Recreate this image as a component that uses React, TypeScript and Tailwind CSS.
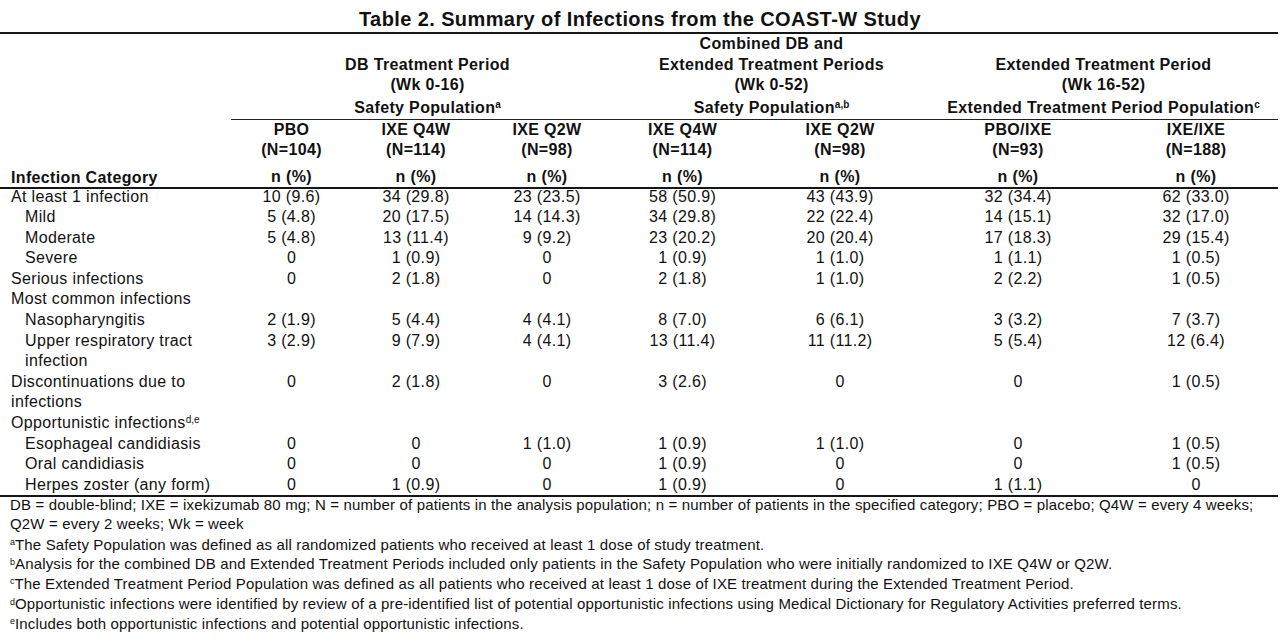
import React from "react";

type Row = { label: React.ReactNode; indent?: boolean; vals?: string[] };

const rows: Row[] = [
  { label: "At least 1 infection", vals: ["10 (9.6)", "34 (29.8)", "23 (23.5)", "58 (50.9)", "43 (43.9)", "32 (34.4)", "62 (33.0)"] },
  { label: "Mild", indent: true, vals: ["5 (4.8)", "20 (17.5)", "14 (14.3)", "34 (29.8)", "22 (22.4)", "14 (15.1)", "32 (17.0)"] },
  { label: "Moderate", indent: true, vals: ["5 (4.8)", "13 (11.4)", "9 (9.2)", "23 (20.2)", "20 (20.4)", "17 (18.3)", "29 (15.4)"] },
  { label: "Severe", indent: true, vals: ["0", "1 (0.9)", "0", "1 (0.9)", "1 (1.0)", "1 (1.1)", "1 (0.5)"] },
  { label: "Serious infections", vals: ["0", "2 (1.8)", "0", "2 (1.8)", "1 (1.0)", "2 (2.2)", "1 (0.5)"] },
  { label: "Most common infections" },
  { label: "Nasopharyngitis", indent: true, vals: ["2 (1.9)", "5 (4.4)", "4 (4.1)", "8 (7.0)", "6 (6.1)", "3 (3.2)", "7 (3.7)"] },
  {
    label: (
      <>
        Upper respiratory tract
        <br />
        infection
      </>
    ),
    indent: true,
    vals: ["3 (2.9)", "9 (7.9)", "4 (4.1)", "13 (11.4)", "11 (11.2)", "5 (5.4)", "12 (6.4)"],
  },
  {
    label: (
      <>
        Discontinuations due to
        <br />
        infections
      </>
    ),
    vals: ["0", "2 (1.8)", "0", "3 (2.6)", "0", "0", "1 (0.5)"],
  },
  {
    label: (
      <>
        Opportunistic infections<sup className="text-[10px] tracking-normal">d,e</sup>
      </>
    ),
  },
  { label: "Esophageal candidiasis", indent: true, vals: ["0", "0", "1 (1.0)", "1 (0.9)", "1 (1.0)", "0", "1 (0.5)"] },
  { label: "Oral candidiasis", indent: true, vals: ["0", "0", "0", "1 (0.9)", "0", "0", "1 (0.5)"] },
  { label: "Herpes zoster (any form)", indent: true, vals: ["0", "1 (0.9)", "0", "1 (0.9)", "0", "1 (1.1)", "0"] },
];

const colPad = ["", "", "", "pr-[10px]", "pr-[10px]", "", "pl-[7px]"];

const cols = [
  ["PBO", "(N=104)"],
  ["IXE Q4W", "(N=114)"],
  ["IXE Q2W", "(N=98)"],
  ["IXE Q4W", "(N=114)"],
  ["IXE Q2W", "(N=98)"],
  ["PBO/IXE", "(N=93)"],
  ["IXE/IXE", "(N=188)"],
];

function Sup({ children }: { children: React.ReactNode }) {
  return <sup className="text-[10px] font-bold tracking-normal">{children}</sup>;
}

function FSup({ children }: { children: React.ReactNode }) {
  return <sup className="text-[9px] tracking-normal">{children}</sup>;
}

export default function App() {
  return (
    <div className="w-[1280px] h-[641px] bg-white text-[#111] font-['Liberation_Sans',Arial,sans-serif] tracking-[0.35px] overflow-hidden">
      <div className="h-[32px] pt-[7px] text-center text-[20px] leading-[24px] font-bold tracking-[0.4px]">
        Table 2. Summary of Infections from the COAST-W Study
      </div>
      <div className="w-[1278px] border-t-2 border-[#161616]">
        <table className="w-[1278px] table-fixed border-collapse text-[16px] leading-[20.6px]">
          <colgroup>
            <col className="w-[231px]" />
            <col className="w-[121px]" />
            <col className="w-[128px]" />
            <col className="w-[134px]" />
            <col className="w-[147px]" />
            <col className="w-[168px]" />
            <col className="w-[178px]" />
            <col className="w-[171px]" />
          </colgroup>
          <thead className="font-bold">
            <tr>
              <th rowSpan={2} className="align-bottom text-left pl-[11px] p-0 font-bold border-b-2 border-[#161616]">
                <div className="h-[20px] leading-[20px] -mb-[1px]">Infection Category</div>
              </th>
              <th colSpan={3} className="align-bottom p-0 pl-[10px] font-bold border-b-[1.5px] border-[#222] leading-[20.5px]">
                <div>DB Treatment Period</div>
                <div>(Wk 0-16)</div>
                <div className="mt-[2.5px]">
                  Safety Population<Sup>a</Sup>
                </div>
              </th>
              <th colSpan={2} className="align-bottom p-0 font-bold border-b-[1.5px] border-[#222] leading-[20.5px]">
                <div>Combined DB and</div>
                <div>Extended Treatment Periods</div>
                <div>(Wk 0-52)</div>
                <div className="mt-[2.5px]">
                  Safety Population<Sup>a,b</Sup>
                </div>
              </th>
              <th colSpan={2} className="align-bottom p-0 font-bold border-b-[1.5px] border-[#222] leading-[20.5px]">
                <div>Extended Treatment Period</div>
                <div>(Wk 16-52)</div>
                <div className="mt-[2.5px] whitespace-nowrap">
                  Extended Treatment Period Population<Sup>c</Sup>
                </div>
              </th>
            </tr>
            <tr>
              {cols.map((c, i) => (
                <th key={i} className={`p-0 font-bold text-center border-b-2 border-[#161616] leading-[20.5px] ${colPad[i]}`}>
                  <div>{c[0]}</div>
                  <div>{c[1]}</div>
                  <div className="mt-[6px] leading-[20px]">n (%)</div>
                </th>
              ))}
            </tr>
          </thead>
          <tbody className="font-normal">
            {rows.map((r, ri) => {
              const shift = ri === 0 ? "-mt-[2px]" : "";
              return (
                <tr key={ri} className={ri === rows.length - 1 ? "border-b-2 border-[#161616]" : ""}>
                  <td className={`p-0 align-top whitespace-nowrap ${r.indent ? "pl-[25px]" : "pl-[11px]"}`}>
                    <div className={shift}>{r.label}</div>
                  </td>
                  {cols.map((_, ci) => (
                    <td key={ci} className={`p-0 align-top text-center ${colPad[ci]}`}>
                      <div className={shift}>{r.vals ? r.vals[ci] : "\u00a0"}</div>
                    </td>
                  ))}
                </tr>
              );
            })}
          </tbody>
        </table>
        <div className="pl-[10px] -mt-[2.5px] text-[15px] leading-[19.5px] tracking-[0.15px] whitespace-nowrap">
          <div>
            DB = double-blind; IXE = ixekizumab 80 mg; N = number of patients in the analysis population; n = number of patients in the specified category; PBO = placebo; Q4W = every 4 weeks;
          </div>
          <div>Q2W = every 2 weeks; Wk = week</div>
          <div className="mt-[1px]">
            <FSup>a</FSup>The Safety Population was defined as all randomized patients who received at least 1 dose of study treatment.
          </div>
          <div>
            <FSup>b</FSup>Analysis for the combined DB and Extended Treatment Periods included only patients in the Safety Population who were initially randomized to IXE Q4W or Q2W.
          </div>
          <div>
            <FSup>c</FSup>The Extended Treatment Period Population was defined as all patients who received at least 1 dose of IXE treatment during the Extended Treatment Period.
          </div>
          <div className="mt-[1px]">
            <FSup>d</FSup>Opportunistic infections were identified by review of a pre-identified list of potential opportunistic infections using Medical Dictionary for Regulatory Activities preferred terms.
          </div>
          <div>
            <FSup>e</FSup>Includes both opportunistic infections and potential opportunistic infections.
          </div>
        </div>
      </div>
    </div>
  );
}
